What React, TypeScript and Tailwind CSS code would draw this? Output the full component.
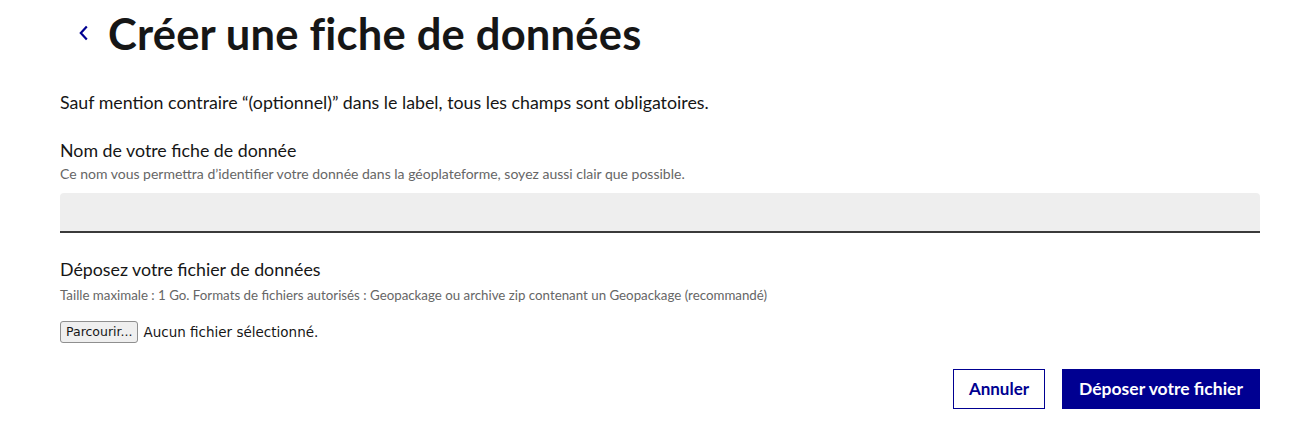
import React from "react";

export default function App() {
  return (
    <div className="w-[1294px] h-[428px] bg-white overflow-hidden font-['Lato',sans-serif] text-[#161616]">
      <div className="pl-[60px] pr-[34px] pt-[11px]">
        <div className="flex items-center h-[44px]">
          <button className="w-[48px] h-[40px] flex items-center justify-center text-[#000091]">
            <svg width="12" height="18" viewBox="0 0 12 18" fill="none">
              <path d="M8.8 2.5 L2.8 9 L8.8 15.5" stroke="#000091" strokeWidth="2.2" />
            </svg>
          </button>
          <h1 className="text-[43.5px] leading-[44px] font-bold tracking-[0.2px]">Créer une fiche de données</h1>
        </div>
        <p className="mt-[35px] text-[17.8px] leading-[24px]">
          Sauf mention contraire “(optionnel)” dans le label, tous les champs sont obligatoires.
        </p>
        <div className="mt-[24px]">
          <label className="block text-[17.8px] leading-[24px]">Nom de votre fiche de donnée</label>
          <span className="block text-[14px] leading-[24px] text-[#666666]">
            Ce nom vous permettra d’identifier votre donnée dans la géoplateforme, soyez aussi clair que possible.
          </span>
          <input className="mt-[7px] block w-full h-[40px] bg-[#eeeeee] rounded-t-[4px] border-b-2 border-[#3a3a3a] outline-none px-4" />
        </div>
        <div className="mt-[24px]">
          <label className="block text-[17.8px] leading-[24px]">Déposez votre fichier de données</label>
          <span className="mt-[2px] block text-[13.3px] leading-[24px] text-[#666666]">
            Taille maximale : 1 Go. Formats de fichiers autorisés : Geopackage ou archive zip contenant un Geopackage (recommandé)
          </span>
          <div className="mt-[14px] flex items-center gap-[5px] font-['DejaVu_Sans',sans-serif] h-[22px]">
            <span className="h-[22px] px-[5px] flex items-center bg-[#efefef] border border-[#8f8f8f] rounded-[3px] text-[12.5px]">
              Parcourir...
            </span>
            <span className="text-[13.5px]">Aucun fichier sélectionné.</span>
          </div>
        </div>
        <div className="mt-[26px] flex justify-end gap-[17px]">
          <button className="h-[40px] px-[15px] border border-[#000091] text-[#000091] text-[17px] font-bold">
            Annuler
          </button>
          <button className="h-[40px] px-[17px] bg-[#000091] text-white text-[17.5px] font-bold">
            Déposer votre fichier
          </button>
        </div>
      </div>
    </div>
  );
}
